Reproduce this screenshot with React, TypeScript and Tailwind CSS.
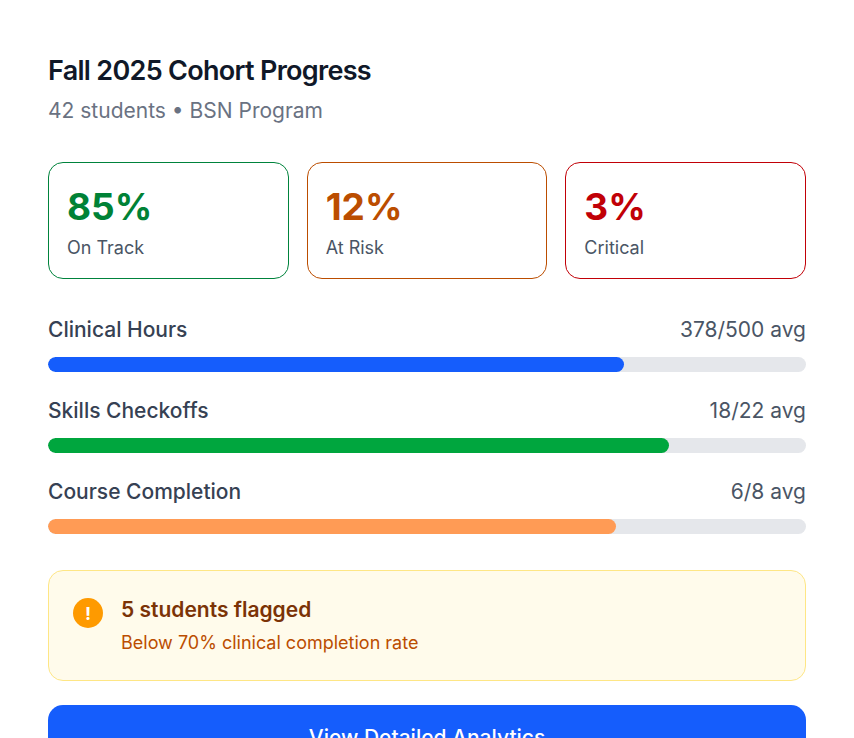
const stats = [
  { value: "85%", label: "On Track", card: "border-[#00833c]", text: "text-[#008236]" },
  { value: "12%", label: "At Risk", card: "border-[#bb4d00]", text: "text-[#bb4d00]" },
  { value: "3%", label: "Critical", card: "border-[#c10007]", text: "text-[#c10007]" },
];

const bars = [
  { label: "Clinical Hours", value: "378/500 avg", width: 576, color: "bg-[#155dfc]" },
  { label: "Skills Checkoffs", value: "18/22 avg", width: 621, color: "bg-[#00a63e]" },
  { label: "Course Completion", value: "6/8 avg", width: 568, color: "bg-[#ff9b55]" },
];

export default function App() {
  return (
    <div className="h-[738px] overflow-hidden bg-white px-12 pt-[52px] font-['Inter',sans-serif]">
      <h3 className="text-[27px] leading-[37px] font-semibold tracking-[-0.7px] text-[#101828]">
        Fall 2025 Cohort Progress
      </h3>
      <p className="mt-[7px] text-[21px] leading-[30px] text-[#6a7282]">42 students • BSN Program</p>

      <div className="mt-9 grid grid-cols-3 gap-[18px]">
        {stats.map((s) => (
          <div key={s.label} className={`h-[117px] rounded-[15px] border-[1.5px] px-[18px] pt-6 ${s.card}`}>
            <div className={`text-[37px] leading-[40px] font-bold ${s.text}`}>{s.value}</div>
            <div className="mt-[7px] text-[18px] leading-[27px] text-[#4a5565]">{s.label}</div>
          </div>
        ))}
      </div>

      <div className="mt-9 flex flex-col gap-6">
        {bars.map((b) => (
          <div key={b.label}>
            <div className="flex justify-between text-[21px] leading-[30px]">
              <span className="font-medium text-[#364153]">{b.label}</span>
              <span className="text-[#4a5565]">{b.value}</span>
            </div>
            <div className="mt-3 h-[15px] overflow-hidden rounded-full bg-[#e5e7eb]">
              <div className={`h-full rounded-full ${b.color}`} style={{ width: b.width }} />
            </div>
          </div>
        ))}
      </div>

      <div className="mt-9 flex h-[111px] gap-[18px] rounded-[15px] border-[1.5px] border-[#fee685] bg-[#fffbeb] px-6 pt-6">
        <div className="mt-[3px] flex size-[30px] shrink-0 items-center justify-center rounded-full bg-[#fe9a00] text-[18px] font-bold text-white">
          !
        </div>
        <div>
          <p className="text-[21px] leading-[30px] font-semibold text-[#7b3306]">5 students flagged</p>
          <p className="mt-[6px] text-[18px] leading-[24px] text-[#bb4d00]">Below 70% clinical completion rate</p>
        </div>
      </div>

      <button className="mt-6 h-[66px] w-full rounded-[15px] bg-[#155dfc] text-[21px] leading-[30px] font-medium text-white">
        View Detailed Analytics
      </button>
    </div>
  );
}
